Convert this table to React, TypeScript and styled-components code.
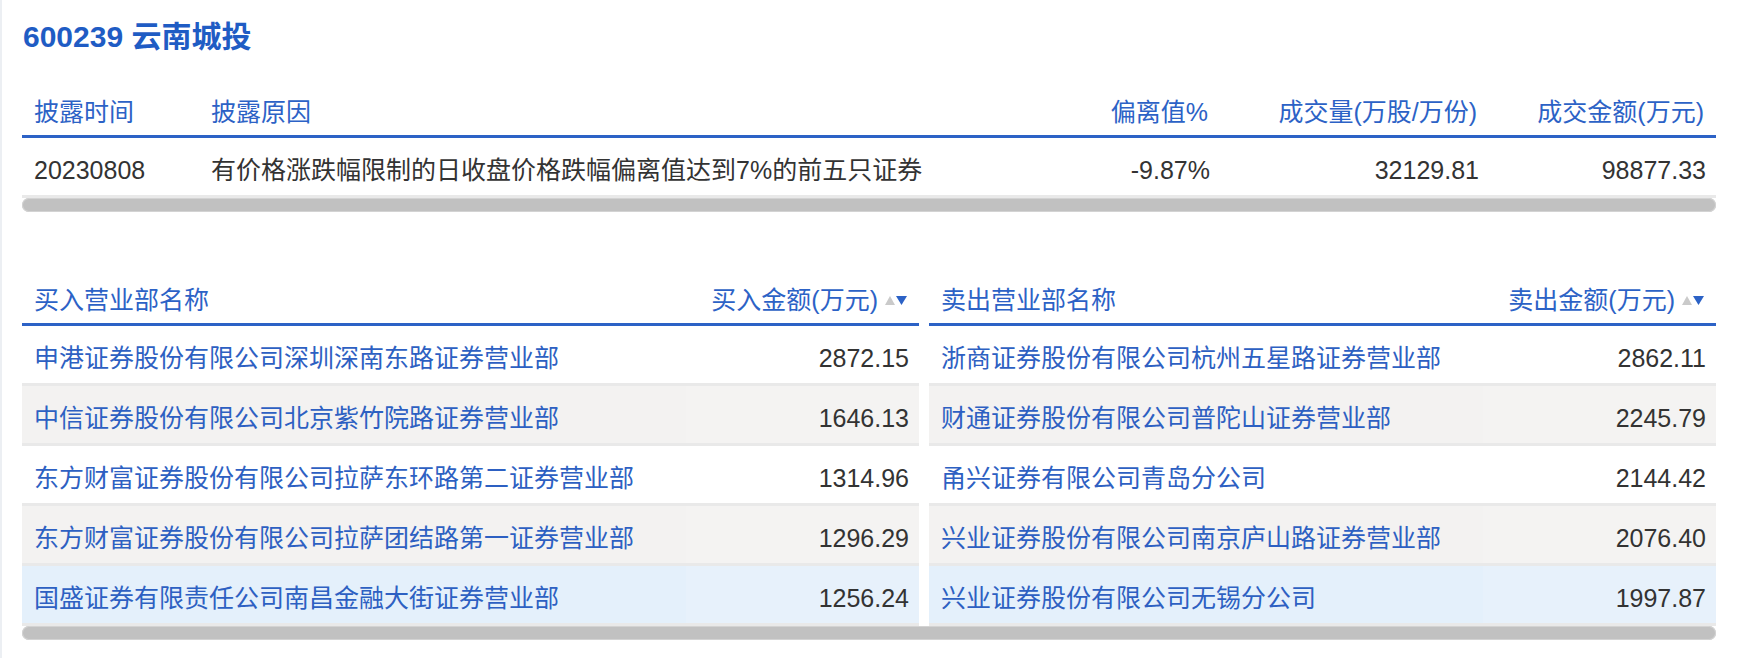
import React from "react";
import styled, { createGlobalStyle } from "styled-components";

const GlobalStyle = createGlobalStyle`
  html, body {
    margin: 0;
    padding: 0;
    background: #ffffff;
  }
  body {
    font-family: "Liberation Sans", "Noto Sans CJK SC", Arial, sans-serif;
    color: #333333;
  }
  * { box-sizing: border-box; }
`;

const BLUE = "#2c62c6";
const LINK = "#2d60c2";

const Page = styled.div`
  width: 1740px;
  min-height: 658px;
  border-left: 2px solid #eceff3;
  padding: 17px 24px 0 20px;
`;

const Title = styled.h1`
  margin: 0;
  font-size: 30px;
  line-height: 40px;
  font-weight: 700;
  color: #1f5cc4;
  padding-left: 1px;
`;

const TopSection = styled.section`
  margin-top: 30px;
`;

const BottomSection = styled.section`
  margin-top: 63px;
`;

const Grid = styled.div<{ $cols: string }>`
  display: grid;
  grid-template-columns: ${(p) => p.$cols};
`;

const HeadRow = styled(Grid)`
  border-bottom: 3px solid ${BLUE};
`;

const BodyRow = styled(Grid)<{ $tone: "white" | "gray" | "blue" }>`
  border-bottom: 3px solid #e9e9e9;
  background: ${(p) =>
    p.$tone === "gray" ? "#f3f2f1" : p.$tone === "blue" ? "#e4f0fb" : "#ffffff"};
`;

const HeadCell = styled.div<{ $right?: boolean }>`
  display: flex;
  align-items: center;
  justify-content: ${(p) => (p.$right ? "flex-end" : "flex-start")};
  gap: 7px;
  padding: 10px 12px 8px 12px;
  font-size: 25px;
  line-height: 30px;
  color: ${BLUE};
  white-space: nowrap;
`;

const BodyCell = styled.div<{ $right?: boolean; $link?: boolean; $shade?: boolean }>`
  padding: 17px ${(p) => (p.$right ? "10px" : "12px")} 10px 12px;
  font-size: 25px;
  line-height: 30px;
  text-align: ${(p) => (p.$right ? "right" : "left")};
  color: ${(p) => (p.$link ? LINK : "#333333")};
  white-space: nowrap;
  background: ${(p) => (p.$shade ? "rgba(255,255,255,0.12)" : "transparent")};
`;

const ScrollBar = styled.div`
  height: 14px;
  border-radius: 7px;
  background: #c1c1c1;
  box-shadow: inset 0 0 0 1px #d3d3d3;
`;

const Tables = styled.div`
  display: flex;
  gap: 10px;
`;

const Table = styled.div<{ $width: number }>`
  width: ${(p) => p.$width}px;
  flex: none;
`;

const SortIcon = () => (
  <svg width="22" height="11" viewBox="0 0 22 11" aria-hidden="true">
    <polygon points="0,10 5,1 10,10" fill="#cacaca" />
    <polygon points="11,1 22,1 16.5,10" fill="#2c62c6" />
  </svg>
);

const topCols = "177px 1fr 140px 269px 227px";

const buyRows = [
  ["申港证券股份有限公司深圳深南东路证券营业部", "2872.15"],
  ["中信证券股份有限公司北京紫竹院路证券营业部", "1646.13"],
  ["东方财富证券股份有限公司拉萨东环路第二证券营业部", "1314.96"],
  ["东方财富证券股份有限公司拉萨团结路第一证券营业部", "1296.29"],
  ["国盛证券有限责任公司南昌金融大街证券营业部", "1256.24"],
];

const sellRows = [
  ["浙商证券股份有限公司杭州五星路证券营业部", "2862.11"],
  ["财通证券股份有限公司普陀山证券营业部", "2245.79"],
  ["甬兴证券有限公司青岛分公司", "2144.42"],
  ["兴业证券股份有限公司南京庐山路证券营业部", "2076.40"],
  ["兴业证券股份有限公司无锡分公司", "1997.87"],
];

const tones: Array<"white" | "gray" | "blue"> = ["white", "gray", "white", "gray", "blue"];

const SeatTable = ({
  width,
  nameTitle,
  amountTitle,
  rows,
}: {
  width: number;
  nameTitle: string;
  amountTitle: string;
  rows: string[][];
}) => (
  <Table $width={width}>
    <HeadRow $cols="1fr 233px">
      <HeadCell>{nameTitle}</HeadCell>
      <HeadCell $right>
        <span>{amountTitle}</span>
        <SortIcon />
      </HeadCell>
    </HeadRow>
    {rows.map(([name, amount], i) => (
      <BodyRow key={name} $cols="1fr 233px" $tone={tones[i]}>
        <BodyCell $link>{name}</BodyCell>
        <BodyCell $right $shade>
          {amount}
        </BodyCell>
      </BodyRow>
    ))}
  </Table>
);

export default function App() {
  return (
    <>
      <GlobalStyle />
      <Page>
        <Title>600239 云南城投</Title>
        <TopSection>
          <HeadRow $cols={topCols}>
            <HeadCell>披露时间</HeadCell>
            <HeadCell>披露原因</HeadCell>
            <HeadCell $right>偏离值%</HeadCell>
            <HeadCell $right>成交量(万股/万份)</HeadCell>
            <HeadCell $right>成交金额(万元)</HeadCell>
          </HeadRow>
          <BodyRow $cols={topCols} $tone="white">
            <BodyCell>20230808</BodyCell>
            <BodyCell>有价格涨跌幅限制的日收盘价格跌幅偏离值达到7%的前五只证券</BodyCell>
            <BodyCell $right>-9.87%</BodyCell>
            <BodyCell $right>32129.81</BodyCell>
            <BodyCell $right>98877.33</BodyCell>
          </BodyRow>
          <ScrollBar />
        </TopSection>
        <BottomSection>
          <Tables>
            <SeatTable
              width={897}
              nameTitle="买入营业部名称"
              amountTitle="买入金额(万元)"
              rows={buyRows}
            />
            <SeatTable
              width={787}
              nameTitle="卖出营业部名称"
              amountTitle="卖出金额(万元)"
              rows={sellRows}
            />
          </Tables>
          <ScrollBar />
        </BottomSection>
      </Page>
    </>
  );
}
